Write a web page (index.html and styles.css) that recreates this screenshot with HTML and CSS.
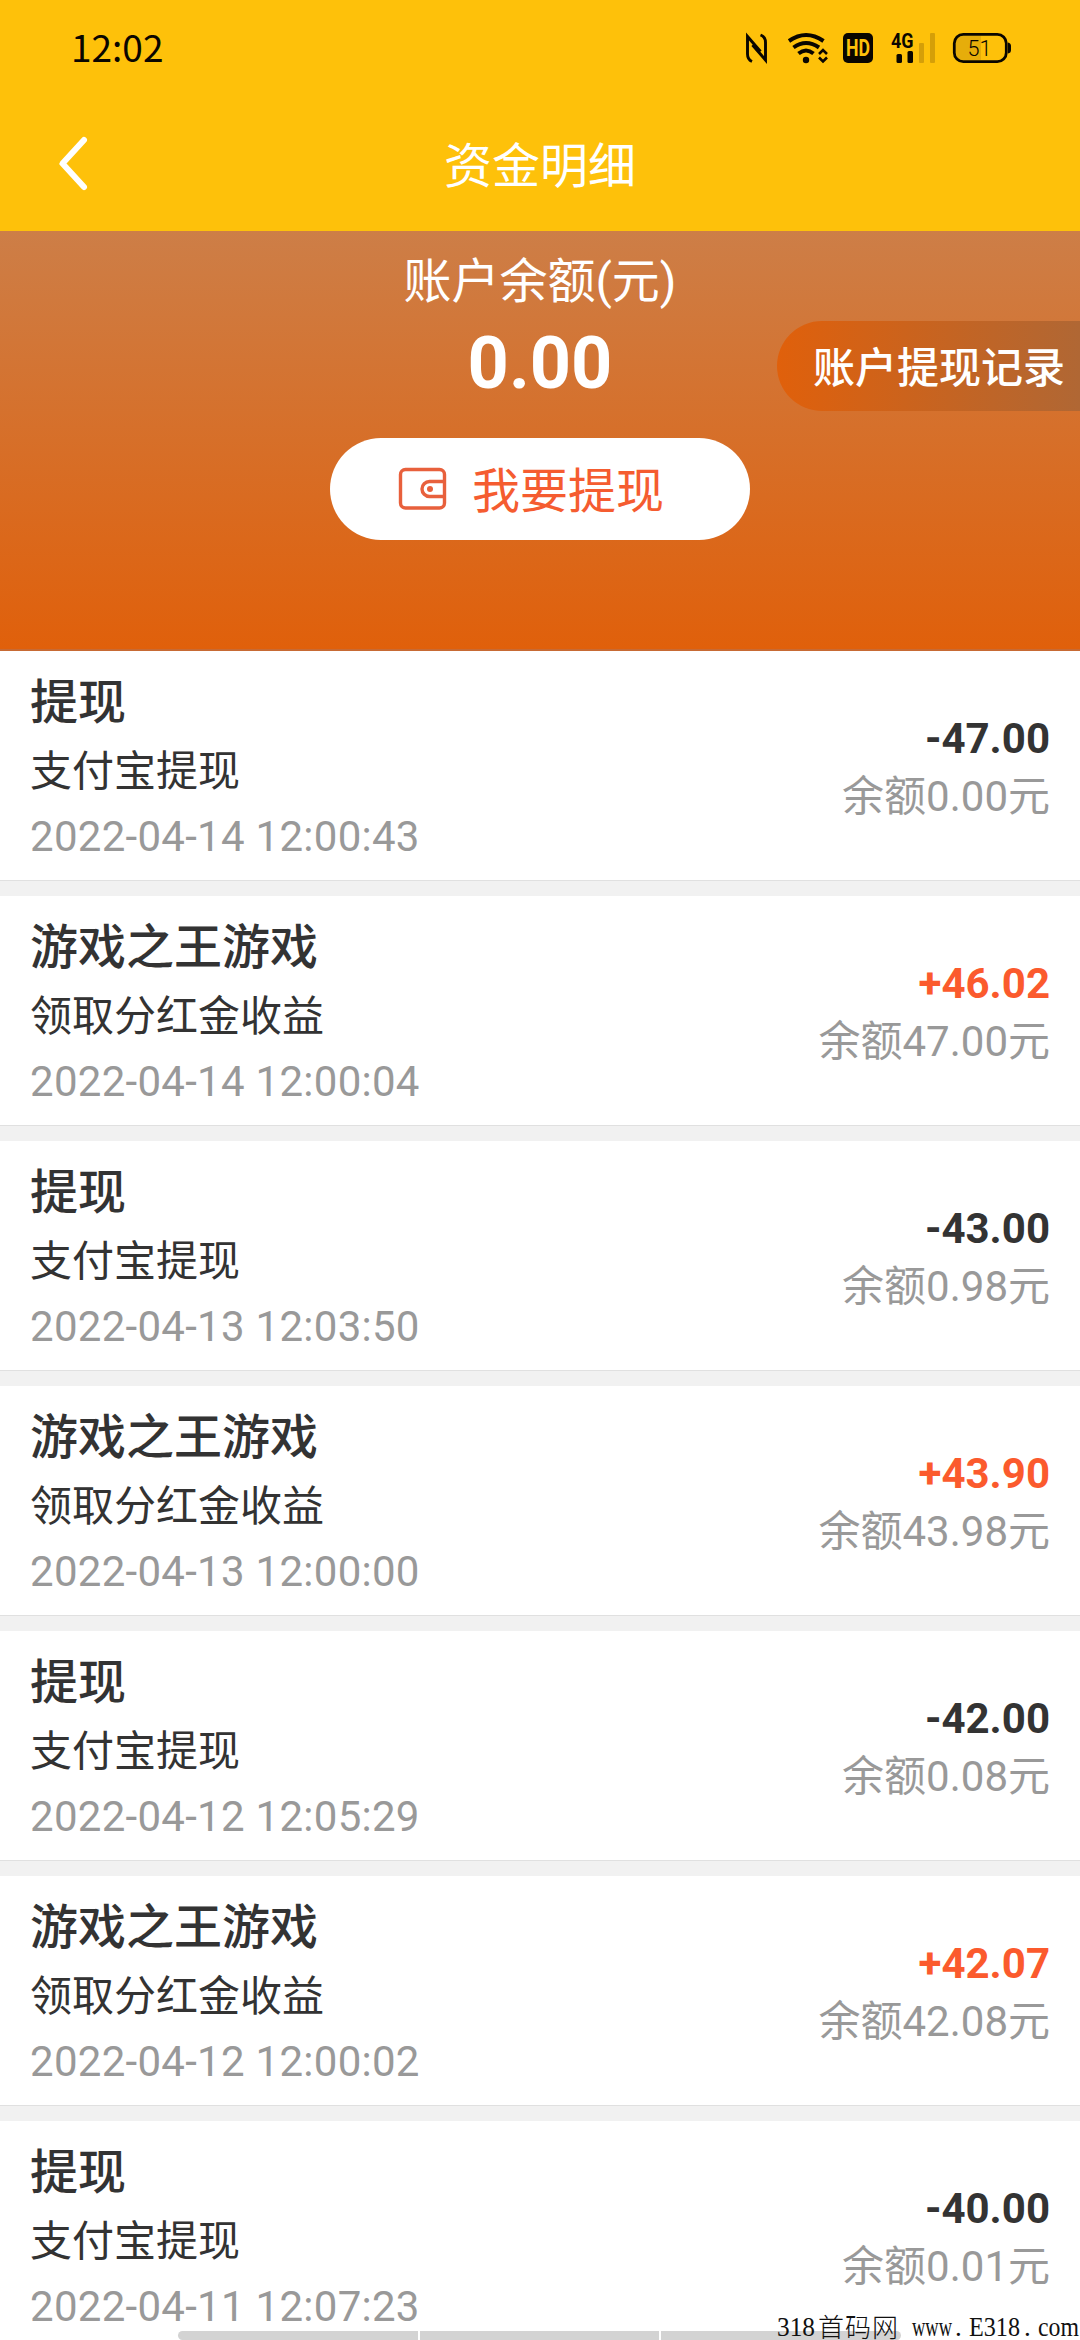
FILE: index.html
```html
<!DOCTYPE html>
<html lang="zh-CN">
<head>
<meta charset="utf-8">
<title>资金明细</title>
<link rel="stylesheet" href="styles.css">
</head>
<body>
<div class="screen">
  <header class="top">
    <div class="status">
      <span class="clock">12:02</span>
      <svg class="status-icons" width="270" height="50" viewBox="744 23 270 50">
        <g fill="none" stroke="#0a0600" stroke-width="2.900">
          <path d="M752 61.500C748.500 60 747.500 58 747.500 54V36.500L760.500 51.500"/>
          <path d="M760.500 35C764.500 36.500 765.500 39 765.500 42.500V60L752.500 45"/>
        </g>
        <g fill="none" stroke="#0a0600" stroke-width="4">
          <path d="M789 41Q806 29 823.500 41"/>
          <path d="M793.500 47.500Q806 38.500 819 47.500"/>
          <path d="M798.500 53.500Q806 47.500 813.500 53.500"/>
        </g>
        <circle cx="806" cy="60" r="3.200" fill="#0a0600"/>
        <path d="M819 54l4-4 4 4M819 57.500l4 4 4-4" fill="none" stroke="#0a0600" stroke-width="2.600"/>
        <rect x="843" y="33" width="30" height="30" rx="5" fill="#0a0600"/>
        <text class="hd" x="846" y="56" textLength="24" lengthAdjust="spacingAndGlyphs">HD</text>
        <text class="net" x="891" y="47.500" textLength="22.500" lengthAdjust="spacingAndGlyphs">4G</text>
        <rect x="896.500" y="54" width="5.500" height="9" rx="1.500" fill="#0a0600"/>
        <rect x="907.500" y="51" width="5.500" height="12" rx="1.500" fill="#0a0600"/>
        <rect x="919" y="43" width="5" height="20" rx="1" fill="#d59f08"/>
        <rect x="930" y="33" width="5" height="30" rx="1" fill="#d59f08"/>
        <path d="M981 36H963Q956 36 956 44V52Q956 60 963 60H981Z" fill="#e6ad0a"/>
        <rect x="954.300" y="34.300" width="52" height="27.400" rx="9" fill="none" stroke="#0a0600" stroke-width="2.800"/>
        <path d="M1008 42.500Q1011 43 1011 46V50Q1011 53 1008 53.500Z" fill="#0a0600"/>
        <text class="level" x="967.500" y="55.500" textLength="24" lengthAdjust="spacingAndGlyphs">51</text>
      </svg>
    </div>
    <nav class="nav">
      <svg class="back" width="36" height="60" viewBox="0 0 36 60"><path d="M27 6L5.500 29.500L27 53" fill="none" stroke="#fff" stroke-width="6" stroke-linecap="round" stroke-linejoin="round"/></svg>
      <h1 class="title">资金明细</h1>
    </nav>
  </header>

  <section class="hero">
    <div class="hero-label">账户余额(元)</div>
    <div class="hero-sum">0.00</div>
    <div class="withdraw">
      <svg width="48" height="42" viewBox="0 0 48 42" fill="none" stroke="#e8603c" stroke-width="3.400">
        <rect x="1.500" y="1.500" width="44" height="38.500" rx="5"/>
        <path d="M45 13.500H30.500a7.500 7.500 0 0 0 0 15H45"/>
        <circle cx="31" cy="21" r="3" fill="#e8603c" stroke="none"/>
      </svg>
      <span>我要提现</span>
    </div>
    <div class="history">账户提现记录</div>
  </section>

  <main class="list">
    <article class="row"><div class="info"><h2>提现</h2><p>支付宝提现</p><time>2022-04-14 12:00:43</time></div><div class="money"><b>-47.00</b><span>余额0.00元</span></div></article>
    <article class="row"><div class="info"><h2>游戏之王游戏</h2><p>领取分红金收益</p><time>2022-04-14 12:00:04</time></div><div class="money"><b class="plus">+46.02</b><span>余额47.00元</span></div></article>
    <article class="row"><div class="info"><h2>提现</h2><p>支付宝提现</p><time>2022-04-13 12:03:50</time></div><div class="money"><b>-43.00</b><span>余额0.98元</span></div></article>
    <article class="row"><div class="info"><h2>游戏之王游戏</h2><p>领取分红金收益</p><time>2022-04-13 12:00:00</time></div><div class="money"><b class="plus">+43.90</b><span>余额43.98元</span></div></article>
    <article class="row"><div class="info"><h2>提现</h2><p>支付宝提现</p><time>2022-04-12 12:05:29</time></div><div class="money"><b>-42.00</b><span>余额0.08元</span></div></article>
    <article class="row"><div class="info"><h2>游戏之王游戏</h2><p>领取分红金收益</p><time>2022-04-12 12:00:02</time></div><div class="money"><b class="plus">+42.07</b><span>余额42.08元</span></div></article>
    <article class="row"><div class="info"><h2>提现</h2><p>支付宝提现</p><time>2022-04-11 12:07:23</time></div><div class="money"><b>-40.00</b><span>余额0.01元</span></div></article>
  </main>

  <div class="gesture"><i></i><i></i><i></i></div>
  <svg class="mark" width="306" height="40" viewBox="774 2300 306 40">
    <text x="777" y="2336" textLength="38" lengthAdjust="spacingAndGlyphs">318</text>
    <text class="cjk" x="818" y="2337" textLength="80">首码网</text>
    <text x="912" y="2336" textLength="40" lengthAdjust="spacingAndGlyphs">www</text>
    <text x="955" y="2336">.</text>
    <text x="969" y="2336" textLength="51" lengthAdjust="spacingAndGlyphs">E318</text>
    <text x="1024" y="2336">.</text>
    <text x="1038" y="2336" textLength="41" lengthAdjust="spacingAndGlyphs">com</text>
  </svg>
</div>
</body>
</html>
```
FILE: styles.css
```css
* { box-sizing: border-box; }
body {
  margin: 0;
  background: #fff;
  color: #333;
  font-family: Roboto, "Noto Sans CJK SC", sans-serif;
}
h1, h2, p { margin: 0; font-weight: 400; }
svg { display: block; overflow: visible; }
.screen {
  position: relative;
  width: 1080px;
  height: 2340px;
  overflow: hidden;
}

.top { height: 231px; background: #fec10a; }
.status {
  display: flex;
  justify-content: space-between;
  align-items: center;
  height: 96px;
  padding: 0 66px 0 71px;
}
.clock {
  padding-bottom: 4px;
  color: #0a0600;
  font: 400 37px/56px "Noto Sans CJK SC", sans-serif;
}
.hd { font: 700 24px Roboto, sans-serif; fill: #fec10a; }
.net { font: 700 20px Roboto, sans-serif; fill: #0a0600; }
.level { font: 300 22px Roboto, sans-serif; fill: #0a0600; }
.nav {
  display: grid;
  grid-template-columns: 1fr auto 1fr;
  align-items: center;
  height: 135px;
  padding: 0 57px;
}
.title { padding-top: 6px; color: #fff; font-size: 48px; line-height: 60px; }

.hero {
  position: relative;
  display: flex;
  flex-direction: column;
  align-items: center;
  height: 420px;
  padding-top: 23px;
  color: #fff;
  background: linear-gradient(#cd7e47, #e0600b);
  border-bottom: 2px solid #c76a34;
}
.hero-label { font-size: 48px; line-height: 56px; }
.hero-sum { margin-top: 12px; font-size: 72px; font-weight: 700; line-height: 84px; }
.withdraw {
  display: flex;
  align-items: center;
  gap: 25px;
  width: 420px;
  height: 102px;
  margin-top: 32px;
  padding-left: 69px;
  border-radius: 51px;
  background: #fff;
  color: #f55c30;
  font-size: 48px;
  line-height: 60px;
}
.withdraw span { padding-top: 5px; }
.history {
  position: absolute;
  top: 90px;
  right: 0;
  width: 303px;
  height: 90px;
  padding: 3px 0 0 36px;
  border-radius: 45px 0 0 45px;
  background: linear-gradient(90deg, #e0600b, #b06734);
  font-size: 42px;
  font-weight: 500;
  line-height: 90px;
  white-space: nowrap;
}

.row {
  display: flex;
  justify-content: space-between;
  height: 245px;
  padding: 22px 30px 0;
  border-bottom: 15px solid #f1f1f1;
  box-shadow: inset 0 -1px #e0e0e0;
}
.info { display: flex; flex-direction: column; }
.info h2 { font-size: 48px; font-weight: 500; line-height: 60px; }
.info p { margin-top: 13px; font-size: 42px; line-height: 52px; }
.info time { margin-top: 14px; color: #999; font-size: 42px; line-height: 50px; letter-spacing: 0.28px; }
.money { display: flex; flex-direction: column; align-items: flex-end; padding-top: 41px; }
.money b { font-size: 42px; line-height: 50px; }
.money .plus { color: #fb5a2d; }
.money span { margin-top: 7px; color: #999; font-size: 42px; line-height: 52px; }

.gesture {
  position: absolute;
  left: 178px;
  bottom: 0;
  display: flex;
  gap: 2px;
  width: 723px;
  height: 9px;
}
.gesture i { flex: 1; background: #d3d3d3; }
.gesture i:first-child { border-radius: 5px 0 0 5px; }
.gesture i:last-child { border-radius: 0 5px 5px 0; }
.mark {
  position: absolute;
  right: 0;
  bottom: 0;
  fill: #111;
  font: 27px "Liberation Serif", serif;
}
.mark .cjk { font: 300 26px "Noto Sans CJK SC", sans-serif; }
```
